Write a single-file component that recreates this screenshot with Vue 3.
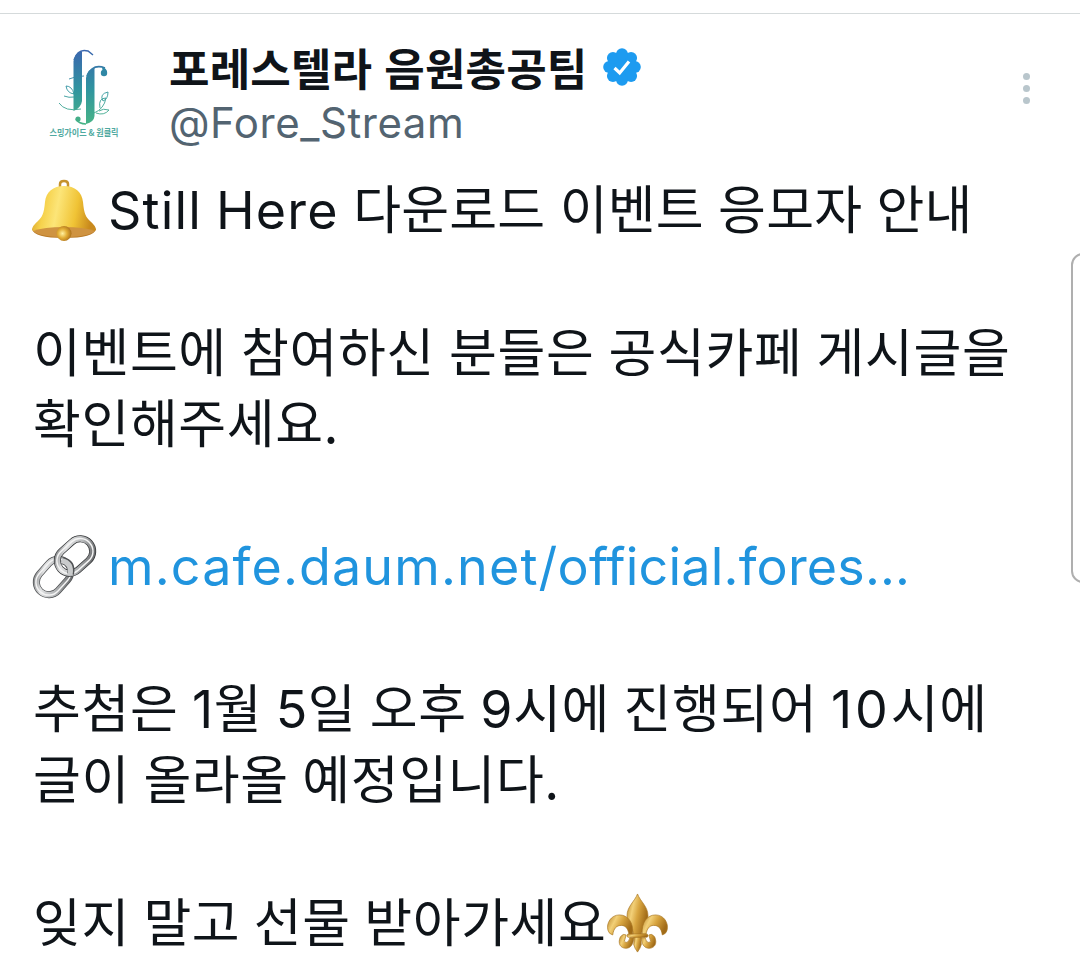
<template>
  <div class="page">
    <article class="tweet">
      <header class="entete">
        <svg class="avatar" viewBox="0 0 120 120">
          <defs>
            <linearGradient id="logoGrad" gradientUnits="userSpaceOnUse" x1="0" y1="20" x2="0" y2="96">
              <stop offset="0" stop-color="#3b66ae" />
              <stop offset="0.5" stop-color="#2f93a0" />
              <stop offset="1" stop-color="#48b585" />
            </linearGradient>
          </defs>
          <path d="M43.500 31 Q45 23 52 21 V71 Q51 78 43.500 81 Z" fill="url(#logoGrad)" />
          <path d="M56 48 Q57 39 64.500 38 V86 Q64 92 56 94 Z" fill="url(#logoGrad)" />
          <g fill="none" stroke="url(#logoGrad)" stroke-width="0.900">
            <path d="M44 30 Q48 18 58 21 L63 25" stroke-width="1.500" />
            <path d="M39 49 Q46 46 54 46" />
            <path d="M57 46 Q63 33 75 38" stroke-width="1.500" />
            <path d="M29 73 Q35 82 51 79" />
            <path d="M56 94 Q49 94 46 89" stroke-width="1.500" />
            <path d="M44 64 Q42 56 36 56 Q37 63 44 64 M44 67 Q39 68 34 66" />
            <path d="M64 83 Q74 79 76 68 M76 68 Q68 68 70 78 M78 62 Q69 64 73 71 Q78 69 78 62 M69 81 Q73 78 79 80 Q74 86 66 83" />
          </g>
          <circle cx="74" cy="43" r="3.200" fill="#2f87a5" />
          <path d="M72 37 Q77 38 77 43 L73 44 Z" fill="#2f87a5" />
          <circle cx="48" cy="89" r="2.600" fill="#44ae88" />
          <text x="19.500" y="106" textLength="69" lengthAdjust="spacingAndGlyphs" class="logo-texte">스밍가이드 &amp; 원클릭</text>
        </svg>
        <div class="identite">
          <div class="nom">
            <span>포레스텔라 음원총공팀</span>
            <svg class="badge" viewBox="0 0 38 38">
              <g fill="#1d9bf0">
                <circle cx="19" cy="19" r="15" />
                <circle v-for="n in 8" :key="n" cx="19" cy="6.200" r="6" :transform="`rotate(${n * 45} 19 19)`" />
              </g>
              <path d="M11.500 20 L16.700 25 L26 13.500" fill="none" stroke="#fff" stroke-width="3.200" />
            </svg>
          </div>
          <div class="pseudo">@Fore_Stream</div>
        </div>
        <div class="menu"><i></i><i></i><i></i></div>
      </header>

      <div class="texte">
        <p class="ligne titre">
          <svg class="emoji" viewBox="0 0 64 64">
            <defs>
              <linearGradient id="bellGrad" x1="0" x2="1" y1="0" y2="0.150">
                <stop offset="0" stop-color="#cf9420" />
                <stop offset="0.250" stop-color="#f6d24c" />
                <stop offset="0.450" stop-color="#fce578" />
                <stop offset="0.750" stop-color="#f0c335" />
                <stop offset="1" stop-color="#c98a1d" />
              </linearGradient>
              <radialGradient id="clapGrad" cx="0.400" cy="0.500" r="0.600">
                <stop offset="0" stop-color="#fff0a0" />
                <stop offset="0.500" stop-color="#e3ae35" />
                <stop offset="1" stop-color="#ac701b" />
              </radialGradient>
            </defs>
            <path d="M28 9 V5 Q28 2 32 2 Q36 2 36 5 V9" fill="none" stroke="#c5922b" stroke-width="2.500" />
            <path d="M0 50 Q8 46 32 46 Q56 46 64 50 Q62 59 32 59 Q2 59 0 50Z" fill="#b87925" />
            <path d="M32 7 C43 7 50 13 51 23 C52 35 54 38 58 42 Q64 47 64 51 Q58 56 32 56 Q6 56 0 51 Q0 47 6 42 C10 38 12 35 13 23 C14 13 21 7 32 7Z" fill="url(#bellGrad)" />
            <path d="M1 52 Q12 48 32 48 Q52 48 63 52 Q56 58 32 58 Q8 58 1 52Z" fill="#cf9341" />
            <circle cx="32" cy="54.500" r="7.500" fill="url(#clapGrad)" />
          </svg>
          <span class="latin">Still Here</span> 다운로드 이벤트 응모자 안내
        </p>
        <p class="ligne"></p>
        <p class="ligne">이벤트에 참여하신 분들은 공식카페 게시글을</p>
        <p class="ligne">확인해주세요.</p>
        <p class="ligne"></p>
        <p class="ligne">
          <svg class="emoji" viewBox="0 0 64 64">
            <defs>
              <linearGradient id="chainGrad" x1="0" x2="1" y1="0" y2="1">
                <stop offset="0" stop-color="#77797b" />
                <stop offset="0.250" stop-color="#e2e3e4" />
                <stop offset="0.600" stop-color="#b3b5b7" />
                <stop offset="1" stop-color="#5c5e60" />
              </linearGradient>
            </defs>
            <g fill="none">
              <g transform="rotate(-48 21.500 42)">
                <rect x="2" y="29.500" width="39" height="25" rx="12.500" stroke="#4c4e50" stroke-width="7" />
                <rect x="2" y="29.500" width="39" height="25" rx="12.500" stroke="url(#chainGrad)" stroke-width="5.600" />
                <rect x="1.700" y="29.200" width="39.500" height="25.500" rx="12.500" stroke="#f3f3f3" stroke-width="1.500" />
              </g>
              <g transform="rotate(-42 43 21)">
                <rect x="23.500" y="8.500" width="39" height="25" rx="12.500" stroke="#333537" stroke-width="7" />
                <rect x="23.500" y="8.500" width="39" height="25" rx="12.500" stroke="url(#chainGrad)" stroke-width="5.600" />
                <rect x="23.200" y="8.200" width="39.500" height="25.500" rx="12.500" stroke="#f3f3f3" stroke-width="1.500" />
              </g>
              <path d="M30 25.500 Q41 28 38.500 39" stroke="#505254" stroke-width="7" />
              <path d="M29.500 25.500 Q40.500 28 38 40" stroke="#c9cbcc" stroke-width="5" />
            </g>
          </svg>
          <a class="latin lien"><span class="domaine">m.cafe.daum.net</span>/official.fores…</a>
        </p>
        <p class="ligne"></p>
        <p class="ligne serree">추첨은 <span class="chiffre">1</span>월 <span class="chiffre">5</span>일 오후 <span class="chiffre">9</span>시에 진행되어 <span class="chiffre dix">10</span>시에</p>
        <p class="ligne serree">글이 올라올 예정입니다.</p>
        <p class="ligne"></p>
        <p class="ligne serree">잊지 말고 선물 받아가세요<svg class="emoji lys" viewBox="0 0 64 64">
            <defs>
              <linearGradient id="lysGrad" x1="0" x2="1" y1="0" y2="0.400">
                <stop offset="0" stop-color="#b57f24" />
                <stop offset="0.350" stop-color="#f2d078" />
                <stop offset="0.600" stop-color="#d8a540" />
                <stop offset="1" stop-color="#a16b18" />
              </linearGradient>
            </defs>
            <g fill="url(#lysGrad)" stroke="#a87420" stroke-width="0.700">
              <path d="M32 1 C35 9 43 14 43 24 C43 32 37 36 36 44 H28 C27 36 21 32 21 24 C21 14 29 9 32 1Z" />
              <path d="M27 43 C28 31 22 23 13 23 C4 23 -1 32 1 39 Q2 43 6 44 C7 37 10 34 15 34 C20 34 22 38 23 43Z" />
              <path d="M37 43 C36 31 42 23 51 23 C60 23 65 32 63 39 Q62 43 58 44 C57 37 54 34 49 34 C44 34 42 38 41 43Z" />
              <path d="M28 47 C28 53 25 58 20 58 C14 58 11 53 14 46 Q17 42 20 44 L19 48 Q17 51 20 52 Q23 52 24 47Z" />
              <path d="M36 47 C36 53 39 58 44 58 C50 58 53 53 50 46 Q47 42 44 44 L45 48 Q47 51 44 52 Q41 52 40 47Z" />
              <path d="M28 46 H36 Q35 49 36 54 Q35 58 32 62 Q29 58 28 54 Q29 49 28 46Z" />
              <rect x="21" y="43" width="22" height="3.500" rx="1.700" />
            </g>
          </svg></p>
      </div>
    </article>
    <div class="poignee"></div>
  </div>
</template>

<script setup>
</script>

<style scoped>
.page {
  position: relative;
  width: 1080px;
  height: 960px;
  overflow: hidden;
  background: #fff;
  color: #0f1419;
  font-family: "Noto Sans CJK KR", sans-serif;
}

.tweet {
  box-sizing: border-box;
  margin-top: 13px;
  height: 947px;
  border-top: 1px solid #d5dadb;
}

/*********** entête ***********/
.entete {
  display: flex;
  height: 157px;
  padding: 16px 0 0 30px;
  box-sizing: border-box;
}

.avatar {
  width: 120px;
  height: 120px;
}

.logo-texte {
  font-size: 9px;
  font-weight: bold;
  fill: #4fa9a0;
}

.identite {
  flex: 1;
  padding-left: 19px;
}

.nom {
  display: flex;
  align-items: center;
  height: 74px;
  font-size: 44px;
  font-weight: 700;
  line-height: 74px;
  letter-spacing: 0.15px;
  word-spacing: 2px;
  white-space: nowrap;
}

.badge {
  width: 38px;
  height: 38px;
  margin-left: 16px;
}

.pseudo {
  font-family: Inter, sans-serif;
  font-size: 42px;
  line-height: 38px;
  letter-spacing: 0.55px;
  color: #536471;
}

.menu {
  display: flex;
  flex-direction: column;
  gap: 5px;
  width: 57px;
  padding-top: 43px;
}

.menu i {
  width: 7px;
  height: 7px;
  border-radius: 50%;
  background: #b9c6cc;
}

/*********** texte ***********/
.texte {
  padding-left: 33px;
}

.ligne {
  margin: 0;
  height: 71.3px;
  font-size: 52px;
  line-height: 71.3px;
  letter-spacing: 0.6px;
  word-spacing: 2px;
  white-space: nowrap;
}

.titre {
  letter-spacing: 0.2px;
  word-spacing: 2.5px;
}

.serree {
  word-spacing: 1.3px;
}

.emoji {
  width: 64px;
  height: 64px;
  margin: 0 12px 0 -1px;
  overflow: visible;
  vertical-align: -14px;
}

.lys {
  width: 63px;
  height: 61px;
  margin: 0;
  vertical-align: -12px;
}

.latin,
.chiffre {
  font-family: Inter, sans-serif;
  font-size: 52px;
  line-height: 1;
}

.latin {
  letter-spacing: 1.2px;
  word-spacing: -2px;
}

.lien {
  letter-spacing: 0.2px;
  color: #2094de;
}

.domaine {
  letter-spacing: 1.15px;
}

.dix {
  letter-spacing: 3px;
}
/*****************************/

.poignee {
  position: absolute;
  top: 253px;
  left: 1071px;
  width: 30px;
  height: 326px;
  border: 2px solid #afafaf;
  border-radius: 12px;
  background: #fff;
}
</style>

<style>
body {
  margin: 0;
  overflow: hidden;
}
</style>
